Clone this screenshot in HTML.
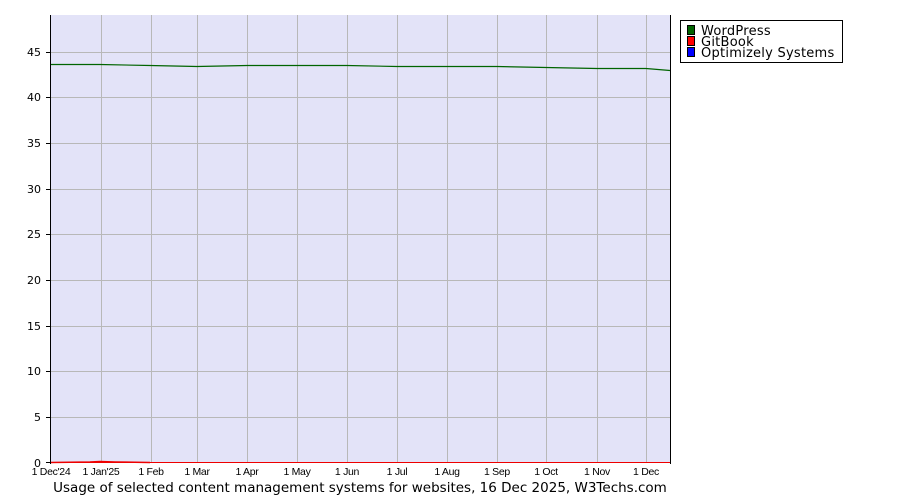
<!DOCTYPE html>
<html><head><style>body{margin:0;background:#fff}svg{display:block}</style></head><body>
<svg width="900" height="500" xmlns="http://www.w3.org/2000/svg" font-family="'DejaVu Sans','Liberation Sans',sans-serif">
<rect x="50" y="15" width="620" height="448" fill="#e3e3f8"/>
<g stroke="#b8b8b8" stroke-width="1">
<line x1="50" x2="670" y1="417.5" y2="417.5"/><line x1="50" x2="670" y1="371.5" y2="371.5"/><line x1="50" x2="670" y1="326.5" y2="326.5"/><line x1="50" x2="670" y1="280.5" y2="280.5"/><line x1="50" x2="670" y1="234.5" y2="234.5"/><line x1="50" x2="670" y1="189.5" y2="189.5"/><line x1="50" x2="670" y1="143.5" y2="143.5"/><line x1="50" x2="670" y1="97.5" y2="97.5"/><line x1="50" x2="670" y1="52.5" y2="52.5"/>
<line x1="101.5" x2="101.5" y1="15" y2="463"/><line x1="151.5" x2="151.5" y1="15" y2="463"/><line x1="197.5" x2="197.5" y1="15" y2="463"/><line x1="247.5" x2="247.5" y1="15" y2="463"/><line x1="297.5" x2="297.5" y1="15" y2="463"/><line x1="347.5" x2="347.5" y1="15" y2="463"/><line x1="397.5" x2="397.5" y1="15" y2="463"/><line x1="447.5" x2="447.5" y1="15" y2="463"/><line x1="497.5" x2="497.5" y1="15" y2="463"/><line x1="546.5" x2="546.5" y1="15" y2="463"/><line x1="597.5" x2="597.5" y1="15" y2="463"/><line x1="646.5" x2="646.5" y1="15" y2="463"/>
</g>
<polyline fill="none" stroke="#006400" stroke-width="1.2" points="50,64.5 100,64.5 150,65.5 197,66.5 247,65.5 347,65.5 397,66.5 497,66.5 546,67.5 597,68.5 646,68.5 670,70.5"/>
<path d="M50,462.5 L90,462 L100,461.5 L115,462 L150,462.5" fill="none" stroke="#e00" stroke-width="1.5"/>
<line x1="50" x2="670" y1="462.5" y2="462.5" stroke="#e00"/>
<g stroke="#000" stroke-width="1">
<line x1="50.5" x2="50.5" y1="15" y2="464"/><line x1="670.5" x2="670.5" y1="15" y2="464"/>
<line x1="46" x2="50" y1="462.5" y2="462.5"/><line x1="46" x2="50" y1="417.5" y2="417.5"/><line x1="46" x2="50" y1="371.5" y2="371.5"/><line x1="46" x2="50" y1="326.5" y2="326.5"/><line x1="46" x2="50" y1="280.5" y2="280.5"/><line x1="46" x2="50" y1="234.5" y2="234.5"/><line x1="46" x2="50" y1="189.5" y2="189.5"/><line x1="46" x2="50" y1="143.5" y2="143.5"/><line x1="46" x2="50" y1="97.5" y2="97.5"/><line x1="46" x2="50" y1="52.5" y2="52.5"/>
</g>
<g font-size="11" text-anchor="end" fill="#000">
<text x="41" y="467">0</text><text x="41" y="421">5</text><text x="41" y="375">10</text><text x="41" y="330">15</text><text x="41" y="284">20</text><text x="41" y="238">25</text><text x="41" y="193">30</text><text x="41" y="147">35</text><text x="41" y="101">40</text><text x="41" y="56">45</text>
</g>
<g font-size="10.5" text-anchor="middle" font-family="'Liberation Sans',sans-serif" letter-spacing="-0.3">
<text x="51" y="475">1 Dec'24</text><text x="101" y="475">1 Jan'25</text><text x="151" y="475">1 Feb</text><text x="197" y="475">1 Mar</text><text x="247" y="475">1 Apr</text><text x="297" y="475">1 May</text><text x="347" y="475">1 Jun</text><text x="397" y="475">1 Jul</text><text x="447" y="475">1 Aug</text><text x="497" y="475">1 Sep</text><text x="546" y="475">1 Oct</text><text x="597" y="475">1 Nov</text><text x="646" y="475">1 Dec</text>
</g>
<text x="360" y="492" font-size="13.5" text-anchor="middle">Usage of selected content management systems for websites, 16 Dec 2025, W3Techs.com</text>
<rect x="680.5" y="20.5" width="162" height="42" fill="#fff" stroke="#000"/>
<rect x="687.5" y="25.5" width="7" height="9" fill="#006400" stroke="#000"/>
<rect x="687.5" y="36.5" width="7" height="9" fill="#f00" stroke="#000"/>
<rect x="687.5" y="47.5" width="7" height="9" fill="#00f" stroke="#000"/>
<g font-size="13" letter-spacing="0.25"><text x="701" y="35">WordPress</text><text x="701" y="46">GitBook</text><text x="701" y="57">Optimizely Systems</text></g>
</svg>
</body></html>
